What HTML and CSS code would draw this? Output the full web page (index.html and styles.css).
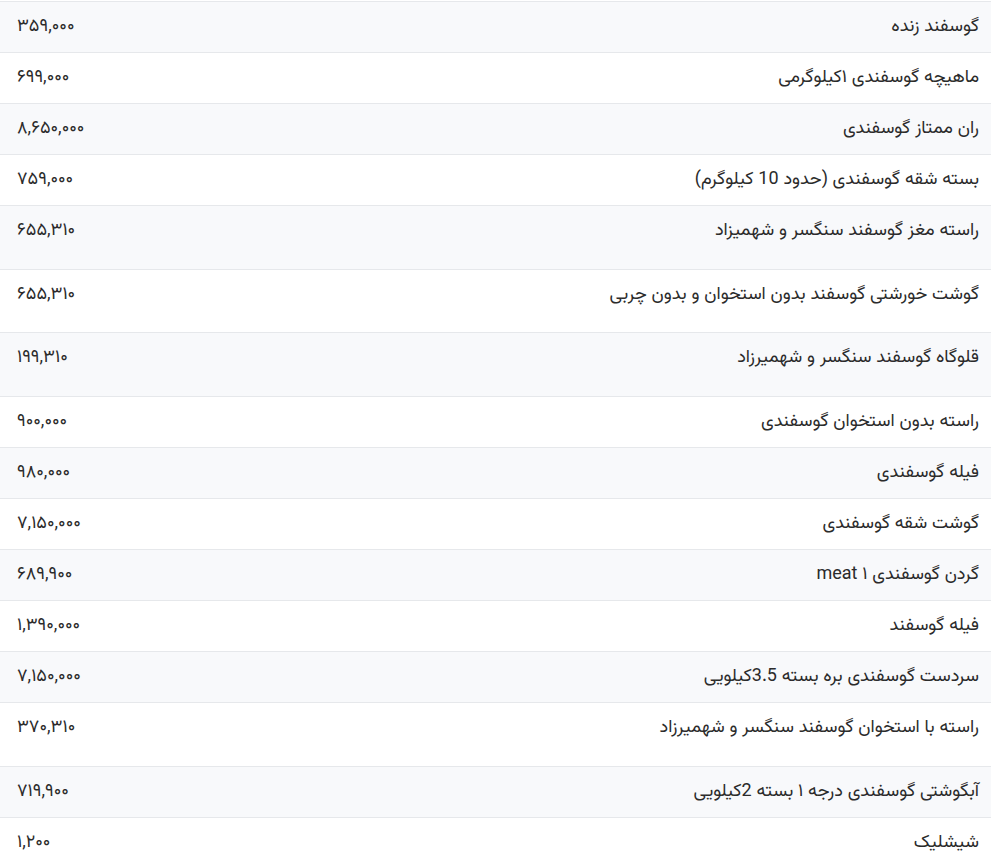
FILE: index.html
```html
<!DOCTYPE html>
<html lang="fa">
<head>
<meta charset="utf-8">
<title>قیمت گوشت گوسفندی</title>
<link rel="stylesheet" href="styles.css">
</head>
<body>
<div class="price-table">
  <div class="row odd"><span class="price">۳۵۹,۰۰۰</span><span class="name">گوسفند زنده</span></div>
  <div class="row"><span class="price">۶۹۹,۰۰۰</span><span class="name">ماهیچه گوسفندی ۱کیلوگرمی</span></div>
  <div class="row odd"><span class="price">۸,۶۵۰,۰۰۰</span><span class="name">ران ممتاز گوسفندی</span></div>
  <div class="row"><span class="price">۷۵۹,۰۰۰</span><span class="name">بسته شقه گوسفندی (حدود 10 کیلوگرم)</span></div>
  <div class="row odd tall"><span class="price">۶۵۵,۳۱۰</span><span class="name">راسته مغز گوسفند سنگسر و شهمیزاد</span></div>
  <div class="row tall"><span class="price">۶۵۵,۳۱۰</span><span class="name">گوشت خورشتی گوسفند بدون استخوان و بدون چربی</span></div>
  <div class="row odd tall"><span class="price">۱۹۹,۳۱۰</span><span class="name">قلوگاه گوسفند سنگسر و شهمیرزاد</span></div>
  <div class="row"><span class="price">۹۰۰,۰۰۰</span><span class="name">راسته بدون استخوان گوسفندی</span></div>
  <div class="row odd"><span class="price">۹۸۰,۰۰۰</span><span class="name">فیله گوسفندی</span></div>
  <div class="row"><span class="price">۷,۱۵۰,۰۰۰</span><span class="name">گوشت شقه گوسفندی</span></div>
  <div class="row odd"><span class="price">۶۸۹,۹۰۰</span><span class="name">گردن گوسفندی ۱ meat</span></div>
  <div class="row"><span class="price">۱,۳۹۰,۰۰۰</span><span class="name">فیله گوسفند</span></div>
  <div class="row odd"><span class="price">۷,۱۵۰,۰۰۰</span><span class="name">سردست گوسفندی بره بسته 3.5کیلویی</span></div>
  <div class="row tall"><span class="price">۳۷۰,۳۱۰</span><span class="name">راسته با استخوان گوسفند سنگسر و شهمیرزاد</span></div>
  <div class="row odd"><span class="price">۷۱۹,۹۰۰</span><span class="name">آبگوشتی گوسفندی درجه ۱ بسته 2کیلویی</span></div>
  <div class="row"><span class="price">۱,۲۰۰</span><span class="name">شیشلیک</span></div>
</div>
</body>
</html>
```

FILE: styles.css
```css
html, body {
  margin: 0;
  padding: 0;
  background: #ffffff;
}

body {
  padding-top: 1px;
  font-family: "Vazir", "Vazirmatn", "Noto Sans Arabic", "DejaVu Sans", sans-serif;
  font-size: 18px;
  color: #2b2b2b;
}

.price-table {
  display: flex;
  flex-direction: column;
}

.row {
  display: flex;
  justify-content: space-between;
  align-items: flex-start;
  border-top: 1px solid #e6e8eb;
  height: 50px;
  padding: 0 12px 0 17px;
  box-sizing: content-box;
  background: #ffffff;
}

.row.odd {
  background: #f8f9fb;
}

.row.tall {
  height: 62.7px;
}

.price,
.name {
  display: block;
  line-height: 50px;
  white-space: nowrap;
}

.price {
  direction: ltr;
}

.name {
  direction: rtl;
  text-align: right;
}
```
